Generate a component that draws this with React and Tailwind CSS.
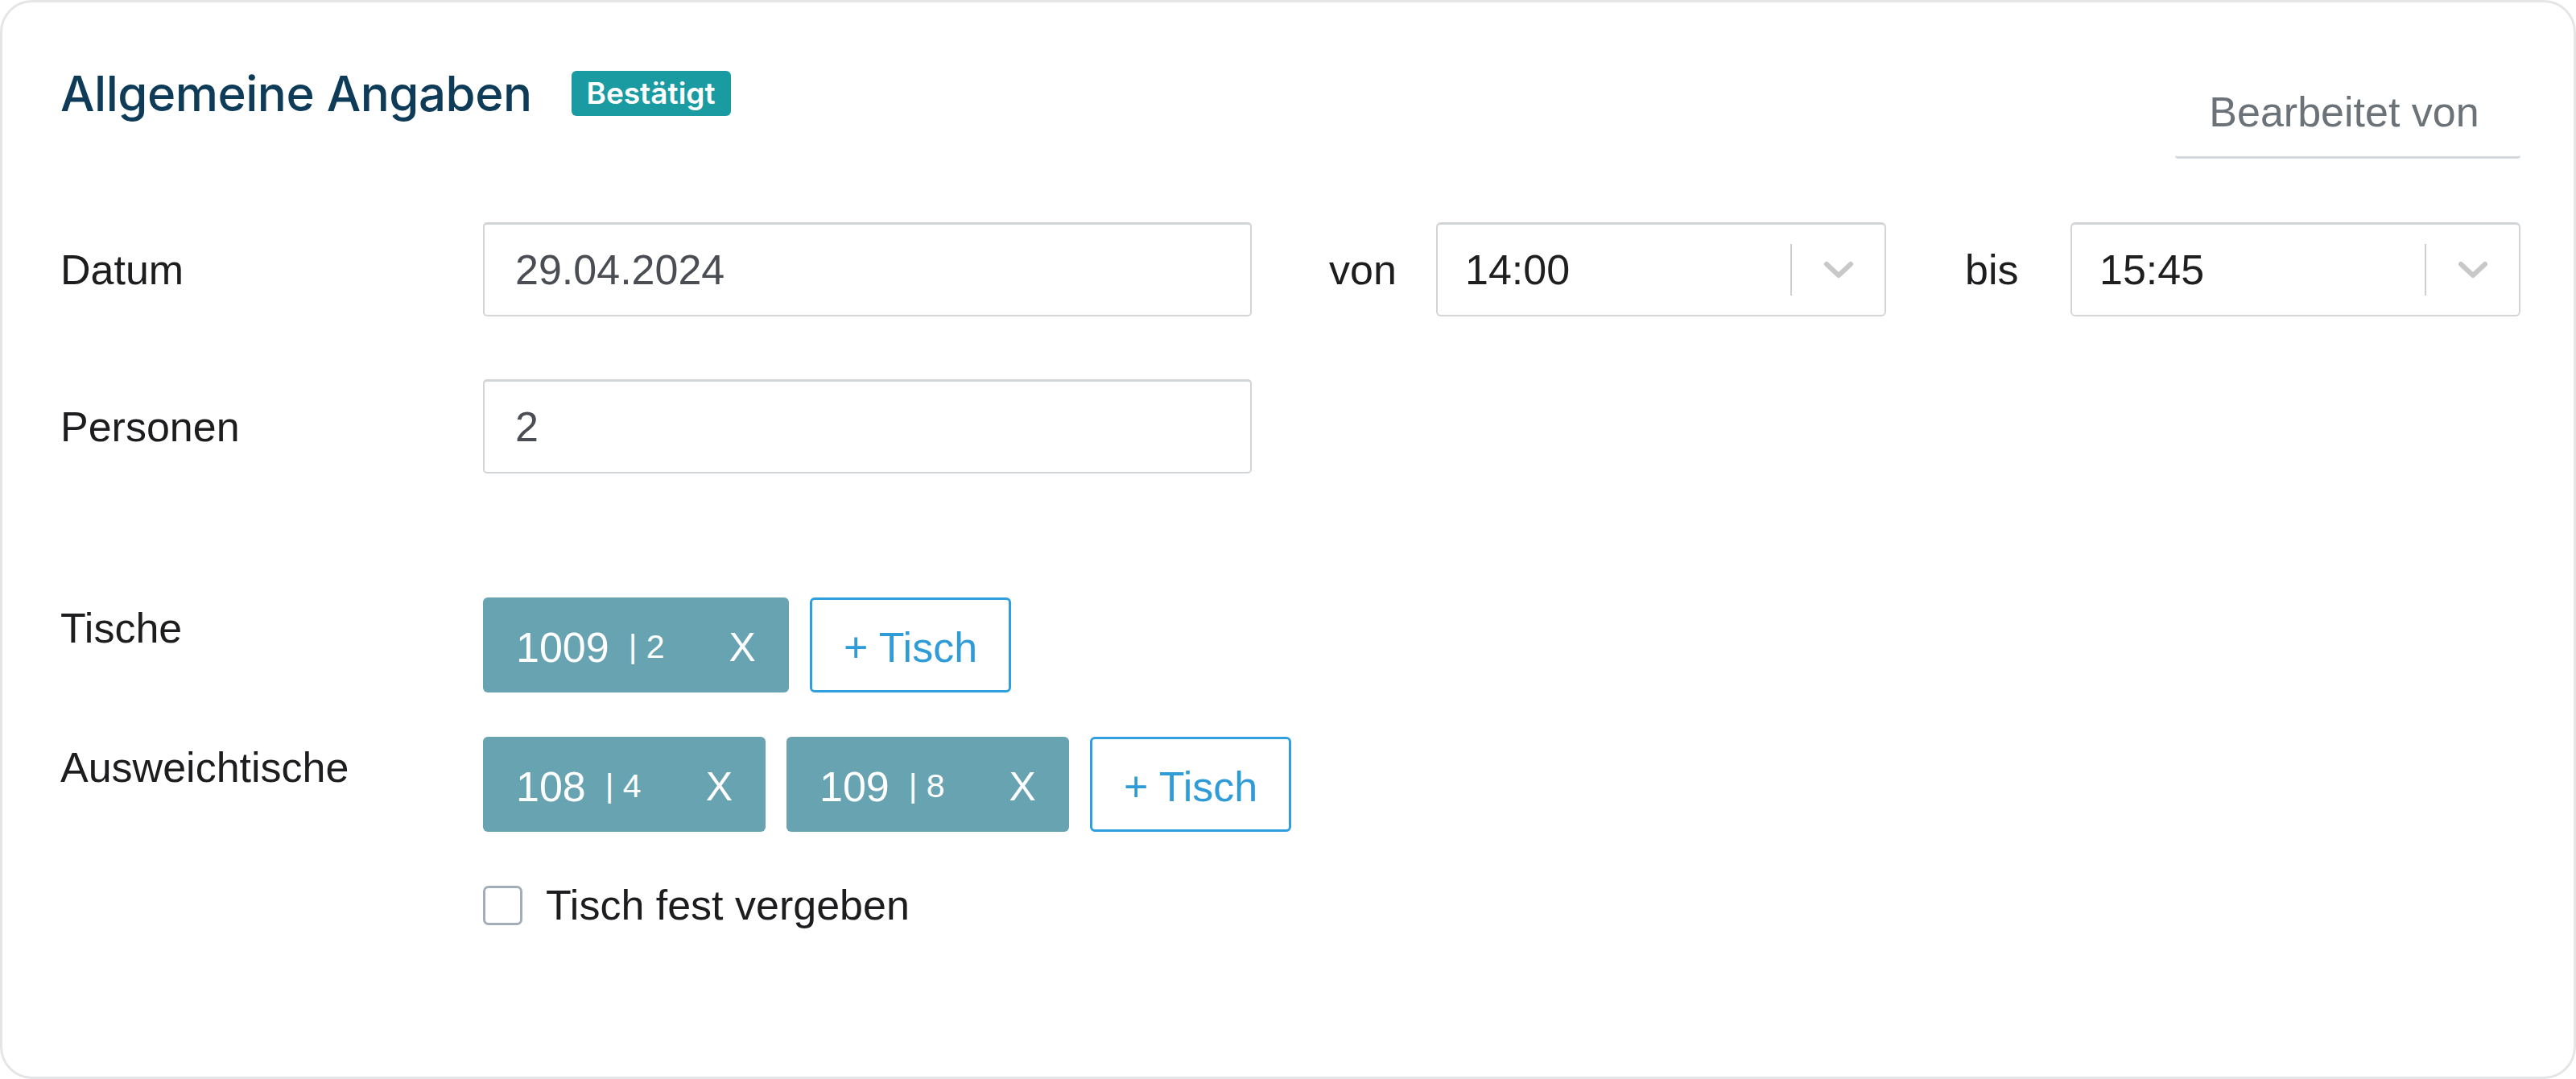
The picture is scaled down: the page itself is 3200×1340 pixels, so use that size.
import React from "react";

const SANS = "font-['Liberation_Sans',Arial,sans-serif]";

function Chevron() {
  return (
    <svg width="40" height="24" viewBox="0 0 40 24" fill="none">
      <polyline points="5,5 20,19 35,5" stroke="#c8c8c8" strokeWidth="6" strokeLinecap="round" strokeLinejoin="round" />
    </svg>
  );
}

function TextField({ value }) {
  return (
    <div className="w-[955px] h-[117px] flex items-center pl-[38px] border-2 border-[#d2d5d8] border-t-[3px] rounded-[5px] bg-white text-[52px] text-[#4a4e54]">
      {value}
    </div>
  );
}

function TimeSelect({ value }) {
  return (
    <div className="w-[559px] h-[117px] flex items-center border-2 border-[#d2d5d8] border-t-[3px] rounded-[6px] bg-white">
      <span className="flex-1 pl-[34px] text-[52px] text-[#1f1f1f]">{value}</span>
      <span className="w-[2px] h-[64px] bg-[#cfcfcf]" />
      <span className="w-[115px] flex items-center justify-center">
        <Chevron />
      </span>
    </div>
  );
}

function TableChip({ num, seats }) {
  return (
    <div className="h-[118px] flex items-center px-[41px] pt-[6px] rounded-[6px] bg-[#68a3b1] text-white">
      <span className="text-[52px]">{num}</span>
      <span className="ml-[24px] text-[41px]">| {seats}</span>
      <span className="ml-[80px] text-[50px]">X</span>
    </div>
  );
}

function AddTable() {
  return (
    <button className="h-[118px] px-[39px] pt-[6px] flex items-center border-[3px] border-[#2f9fe0] rounded-[6px] bg-white text-[52px] text-[#2f9cd8]">
      + Tisch
    </button>
  );
}

function Row({ label, children, top }) {
  return (
    <div className={`flex ${top ? "items-start" : "items-center"}`}>
      <div className={`w-[525px] text-[52px] text-[#1d1d1f] ${top ? "leading-[76px]" : ""}`}>{label}</div>
      {children}
    </div>
  );
}

export default function App() {
  return (
    <div className={`w-[3200px] h-[1340px] bg-white ${SANS}`}>
      <div className="h-full border-[3px] border-[#e3e5e7] rounded-[40px] pl-[72px] pr-[66px] pt-[81px]">
        {/* header */}
        <div className="flex items-start justify-between">
          <div className="flex items-center h-[64px] gap-[49px]">
            <h2 className="font-['Inter',sans-serif] font-medium text-[60px] tracking-[-0.5px] text-[#0d3b58]">
              Allgemeine Angaben
            </h2>
            <span className="h-[56px] px-[19px] flex items-center rounded-[6px] bg-[#1a9ba1] font-['Inter',sans-serif] font-semibold text-[37px] text-white">
              Bestätigt
            </span>
          </div>
          <div className="w-[429px] h-[113px] flex items-center justify-center pr-[9px] border-b-[3px] border-[#d5d8db] rounded-[4px] text-[52px] text-[#6b7278]">
            Bearbeitet von
          </div>
        </div>

        {/* Datum / Zeit */}
        <div className="mt-[79px]">
          <Row label="Datum">
            <TextField value="29.04.2024" />
            <div className="w-[229px] pl-[96px] text-[52px] text-[#1d1d1f]">von</div>
            <TimeSelect value="14:00" />
            <div className="w-[229px] pl-[98px] text-[52px] text-[#1d1d1f]">bis</div>
            <TimeSelect value="15:45" />
          </Row>
        </div>

        <div className="mt-[78px]">
          <Row label="Personen">
            <TextField value="2" />
          </Row>
        </div>

        {/* Tische */}
        <div className="mt-[154px]">
          <Row label="Tische" top>
            <div className="flex gap-[26px]">
              <TableChip num="1009" seats="2" />
              <AddTable />
            </div>
          </Row>
        </div>

        <div className="mt-[55px]">
          <Row label="Ausweichtische" top>
            <div className="flex gap-[26px]">
              <TableChip num="108" seats="4" />
              <TableChip num="109" seats="8" />
              <AddTable />
            </div>
          </Row>
        </div>

        <div className="mt-[52px] ml-[525px] flex items-center gap-[29px]">
          <span className="w-[49px] h-[49px] border-[3px] border-[#a3adb8] rounded-[7px] bg-white" />
          <span className="text-[52px] text-[#1d1d1f]">Tisch fest vergeben</span>
        </div>
      </div>
    </div>
  );
}
